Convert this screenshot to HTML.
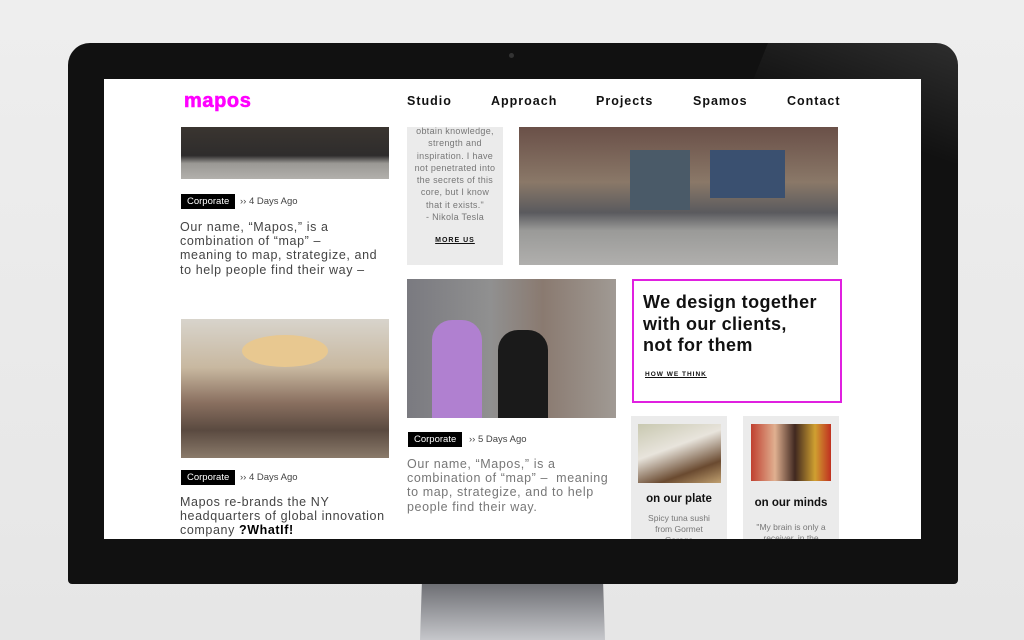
<!DOCTYPE html>
<html><head><meta charset="utf-8"><style>
*{margin:0;padding:0;box-sizing:border-box}
body{width:1024px;height:640px;overflow:hidden;background:linear-gradient(#eeeeee,#e6e6e6);font-family:"Liberation Sans",sans-serif;position:relative}
.a{position:absolute}
.mon{left:68px;top:43px;width:890px;height:541px;background:#111;border-radius:22px 22px 4px 4px;overflow:hidden}
.refl{left:720px;top:43px;width:240px;height:120px;background:linear-gradient(200deg,rgba(255,255,255,.12),rgba(255,255,255,0) 60%);border-radius:0 22px 0 0;clip-path:polygon(20% 0,100% 0,100% 100%,0 100%)}
.stand{left:420px;top:584px;width:185px;height:56px;background:linear-gradient(#6e6f74,#c6c7cb);clip-path:polygon(1% 0,99% 0,100% 100%,0 100%)}
.scr{left:104px;top:79px;width:817px;height:460px;background:#fff;overflow:hidden}
.nav{font-weight:bold;font-size:12.5px;letter-spacing:1px;color:#111;top:94px}
.tag{background:#000;color:#fff;font-size:9.5px;padding:2px 6px;height:15px;line-height:11px}
.date{font-size:9.5px;color:#444}
.txt{font-size:12.5px;line-height:14.2px;letter-spacing:.6px;color:#444;white-space:nowrap}
</style></head><body>
<div class="a mon"></div>
<div class="a refl"></div>
<div class="a" style="left:509px;top:53px;width:5px;height:5px;border-radius:50%;background:#333"></div>
<div class="a stand"></div>
<div class="a scr"></div>
<div class="a" style="left:184px;top:90px;font-size:20px;font-weight:bold;color:#f0f;letter-spacing:.6px;-webkit-text-stroke:.6px #f0f">mapos</div>
<div class="a nav" style="left:407px">Studio</div>
<div class="a nav" style="left:491px">Approach</div>
<div class="a nav" style="left:596px">Projects</div>
<div class="a nav" style="left:693px">Spamos</div>
<div class="a nav" style="left:787px">Contact</div>

<div class="a" style="left:181px;top:127px;width:208px;height:52px;background:linear-gradient(#3a3530 0,#2e2c2c 55%,#9a9894 70%,#b2b0ac 100%)"></div>
<div class="a tag" style="left:181px;top:194px">Corporate</div>
<div class="a date" style="left:240px;top:196px">›› 4 Days Ago</div>
<div class="a txt" style="left:180px;top:220px">Our name, “Mapos,” is a<br>combination of “map” –<br>meaning to map, strategize, and<br>to help people find their way –</div>

<div class="a" style="left:407px;top:127px;width:96px;height:138px;background:#ebebeb"></div>
<div class="a" style="left:407px;top:125px;width:96px;text-align:center;font-size:9px;line-height:12.3px;color:#777;letter-spacing:.3px;white-space:nowrap">obtain knowledge,<br>strength and<br>inspiration. I have<br>not penetrated into<br>the secrets of this<br>core, but I know<br>that it exists."<br>- Nikola Tesla</div>
<div class="a" style="left:407px;top:237px;width:96px;text-align:center;font-size:7px;font-weight:bold;letter-spacing:1px;text-decoration:underline;color:#111">MORE US</div>

<div class="a" style="left:519px;top:127px;width:319px;height:138px;background:linear-gradient(#6a5048 0,#8a7868 40%,#5a5a5e 62%,#9a9a98 75%,#b0afad 100%)"></div>
<div class="a" style="left:630px;top:150px;width:60px;height:60px;background:#4a5a68"></div>
<div class="a" style="left:710px;top:150px;width:75px;height:48px;background:#3a5070"></div>

<div class="a" style="left:181px;top:319px;width:208px;height:139px;background:linear-gradient(#d8d4cc 0,#c8b8a0 35%,#8a7060 60%,#5a4a40 80%,#8a7a6a 100%)"></div>
<div class="a" style="left:242px;top:335px;width:86px;height:32px;border-radius:50%;background:#e8c890"></div>
<div class="a tag" style="left:181px;top:470px">Corporate</div>
<div class="a date" style="left:240px;top:472px">›› 4 Days Ago</div>
<div class="a txt" style="left:180px;top:495px">Mapos re-brands the NY<br>headquarters of global innovation<br>company <b style="color:#000">?WhatIf!</b></div>

<div class="a" style="left:407px;top:279px;width:209px;height:139px;background:linear-gradient(90deg,#7a7a80 0,#909090 40%,#8a7a70 65%,#a09a94 100%)"></div>
<div class="a" style="left:432px;top:320px;width:50px;height:98px;background:#b080d0;border-radius:20px 20px 0 0"></div>
<div class="a" style="left:498px;top:330px;width:50px;height:88px;background:#1a1a1a;border-radius:20px 20px 0 0"></div>
<div class="a tag" style="left:408px;top:432px">Corporate</div>
<div class="a date" style="left:469px;top:434px">›› 5 Days Ago</div>
<div class="a txt" style="left:407px;top:457px;color:#777">Our name, “Mapos,” is a<br>combination of “map” –&nbsp; meaning<br>to map, strategize, and to help<br>people find their way.</div>

<div class="a" style="left:632px;top:279px;width:210px;height:124px;border:2px solid #e020e0"></div>
<div class="a" style="left:643px;top:292px;font-size:18px;font-weight:bold;line-height:21.5px;color:#111;letter-spacing:.4px;white-space:nowrap">We design together<br>with our clients,<br>not for them</div>
<div class="a" style="left:645px;top:371px;font-size:6.5px;font-weight:bold;letter-spacing:1px;text-decoration:underline;color:#111">HOW WE THINK</div>

<div class="a" style="left:631px;top:416px;width:96px;height:124px;background:#ebebeb"></div>
<div class="a" style="left:638px;top:424px;width:83px;height:59px;background:linear-gradient(160deg,#c8c8b0,#e8e4dc 40%,#6a4a30 75%,#c0a070)"></div>
<div class="a" style="left:631px;top:493px;width:96px;text-align:center;font-size:11.5px;font-weight:bold;color:#111">on our plate</div>
<div class="a" style="left:631px;top:513px;width:96px;text-align:center;font-size:8.5px;line-height:11px;color:#777;white-space:nowrap">Spicy tuna sushi<br>from Gormet<br>Garage</div>
<div class="a" style="left:743px;top:416px;width:96px;height:124px;background:#ebebeb"></div>
<div class="a" style="left:751px;top:424px;width:80px;height:57px;background:linear-gradient(90deg,#c04030,#e0b090 30%,#402820 55%,#d0a030 80%,#c03020)"></div>
<div class="a" style="left:743px;top:497px;width:96px;text-align:center;font-size:11.5px;font-weight:bold;color:#111">on our minds</div>
<div class="a" style="left:743px;top:522px;width:96px;text-align:center;font-size:8.5px;line-height:11px;color:#777;white-space:nowrap">"My brain is only a<br>receiver, in the</div>
<div class="a" style="left:104px;top:539px;width:817px;height:45px;background:#111"></div>
</body></html>
